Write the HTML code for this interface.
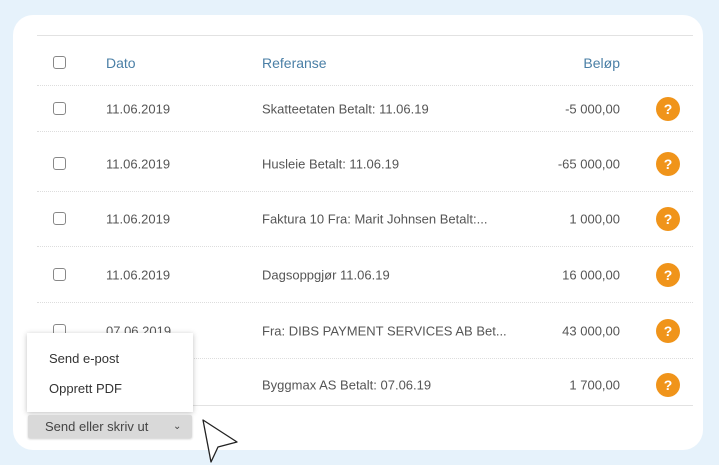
<!DOCTYPE html>
<html><head><style>
body{margin:0;width:719px;height:465px;background:#e6f2fb;font-family:"Liberation Sans",sans-serif;position:relative;overflow:hidden}
.card{position:absolute;left:13px;top:15px;width:690px;height:435px;background:#fff;border-radius:20px}
.top{position:absolute;left:37px;top:35px;width:656px;height:1px;background:#e2e2e2}
.row{position:absolute;left:37px;width:656px;height:55px;border-bottom:1px dotted #ddd;font-size:13px;color:#555}
.row span{position:absolute;top:50%;transform:translateY(-50%)}
.cb{position:absolute;left:16px;top:50%;margin-top:-7px;width:11px;height:11px;border:1.3px solid #888;border-radius:3px}
.d{left:69px}.r{left:225px}.a{right:73px;text-align:right}
.h{color:#4a7fa6;font-size:14px}
.q{position:absolute;left:619px;top:50%;margin-top:-12px;width:24px;height:24px;border-radius:50%;background:#f0941a;color:#fff;font-size:14px;text-align:center;line-height:24px;font-weight:bold}
.menu{position:absolute;left:27px;top:333px;width:166px;height:79px;background:#fff;box-shadow:0 1px 5px rgba(0,0,0,.25);font-size:13px;color:#333}
.btn{position:absolute;left:28px;top:415px;width:164px;height:23px;background:#d9d9d9;border-radius:2px;font-size:13px;color:#444;line-height:23px;box-shadow:0 1px 2px rgba(0,0,0,.2)}
</style></head><body>
<div class="card"></div>
<div class="top"></div>
<div class="row" style="top:41px;height:44px"><div class="cb"></div><span class="d h">Dato</span><span class="r h">Referanse</span><span class="a h">Beløp</span></div>
<div class="row" style="top:86px;height:45px"><div class="cb"></div><span class="d">11.06.2019</span><span class="r">Skatteetaten Betalt: 11.06.19</span><span class="a">-5 000,00</span><div class="q">?</div></div>
<div class="row" style="top:136px"><div class="cb"></div><span class="d">11.06.2019</span><span class="r">Husleie Betalt: 11.06.19</span><span class="a">-65 000,00</span><div class="q">?</div></div>
<div class="row" style="top:191px"><div class="cb"></div><span class="d">11.06.2019</span><span class="r">Faktura 10 Fra: Marit Johnsen Betalt:...</span><span class="a">1 000,00</span><div class="q">?</div></div>
<div class="row" style="top:247px"><div class="cb"></div><span class="d">11.06.2019</span><span class="r">Dagsoppgjør 11.06.19</span><span class="a">16 000,00</span><div class="q">?</div></div>
<div class="row" style="top:303px"><div class="cb"></div><span class="d">07.06.2019</span><span class="r">Fra: DIBS PAYMENT SERVICES AB Bet...</span><span class="a">43 000,00</span><div class="q">?</div></div>
<div class="row" style="top:364px;height:41px;border-bottom:1px solid #e2e2e2"><div class="cb"></div><span class="d">07.06.2019</span><span class="r">Byggmax AS Betalt: 07.06.19</span><span class="a">1 700,00</span><div class="q">?</div></div>
<div class="menu"><div style="position:absolute;left:22px;top:18px">Send e-post</div><div style="position:absolute;left:22px;top:48px">Opprett PDF</div></div>
<div class="btn"><span style="margin-left:17px">Send eller skriv ut</span><span style="position:absolute;left:145px;font-size:10px">&#8964;</span></div>
<svg style="position:absolute;left:0;top:0" width="719" height="465"><path d="M203 420 L211 462 L218 447 L237 442 Z" fill="#fff" stroke="#222" stroke-width="1.3" stroke-linejoin="round"/></svg>
</body></html>
